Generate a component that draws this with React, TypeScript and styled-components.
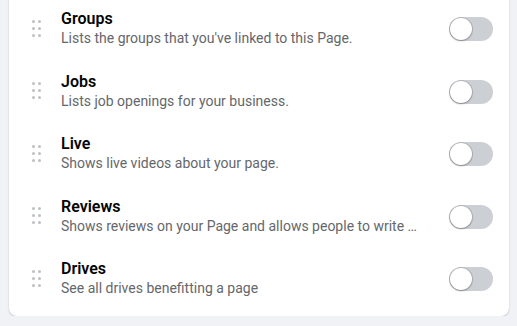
import React, { useState } from 'react';
import styled, { createGlobalStyle } from 'styled-components';

const GlobalStyle = createGlobalStyle`
  html, body {
    margin: 0;
    padding: 0;
    background: #f0f2f5;
    font-family: Roboto, "Liberation Sans", Arial, sans-serif;
    overflow: hidden;
  }
`;

const Page = styled.div`
  padding: 0 8px 0 9px;
`;

const Card = styled.div`
  width: 500px;
  margin-top: -11px;
  padding: 8px 0 6px;
  background: #ffffff;
  border-radius: 8px;
  box-shadow: 0 1px 2px rgba(0, 0, 0, 0.2);
`;

const Row = styled.div`
  display: flex;
  align-items: center;
  padding: 12px 16px 12.5px 23px;
`;

const Handle = styled.div`
  display: grid;
  grid-template-columns: 3px 3px;
  grid-auto-rows: 3px;
  column-gap: 3px;
  row-gap: 4px;
  margin-right: 20px;
  flex-shrink: 0;
`;

const Dot = styled.span`
  width: 3px;
  height: 3px;
  border-radius: 50%;
  background: #bcc0c4;
`;

const Text = styled.div`
  flex: 1;
  min-width: 0;
  margin-right: 32px;
`;

const Title = styled.div`
  font-size: 16px;
  line-height: 20px;
  font-weight: 600;
  color: #050505;
`;

const Description = styled.div`
  font-size: 14px;
  line-height: 18px;
  color: #65676b;
  white-space: nowrap;
  overflow: hidden;
  text-overflow: ellipsis;
`;

const Track = styled.button<{ $on: boolean }>`
  position: relative;
  flex-shrink: 0;
  width: 44px;
  height: 24px;
  margin-top: 2px;
  padding: 0;
  border: none;
  border-radius: 12px;
  background: ${(p) => (p.$on ? '#1877f2' : '#ccd0d5')};
  cursor: pointer;
`;

const Thumb = styled.span<{ $on: boolean }>`
  position: absolute;
  top: 1px;
  left: ${(p) => (p.$on ? '21px' : '1px')};
  width: 22px;
  height: 22px;
  border-radius: 50%;
  background: #ffffff;
  box-shadow: 0 0 0 1px rgba(0, 0, 0, 0.12), 0 1px 2px rgba(0, 0, 0, 0.25);
  transition: left 0.15s;
`;

const tabs = [
  { title: 'Groups', text: "Lists the groups that you've linked to this Page." },
  { title: 'Jobs', text: 'Lists job openings for your business.' },
  { title: 'Live', text: 'Shows live videos about your page.' },
  { title: 'Reviews', text: 'Shows reviews on your Page and allows people to write reviews.' },
  { title: 'Drives', text: 'See all drives benefitting a page' },
];

const App = () => {
  const [enabled, setEnabled] = useState<Record<string, boolean>>({});

  return (
    <>
      <GlobalStyle />
      <Page>
        <Card>
          {tabs.map((tab) => (
            <Row key={tab.title}>
              <Handle>
                {Array.from({ length: 6 }).map((_, i) => (
                  <Dot key={i} />
                ))}
              </Handle>
              <Text>
                <Title>{tab.title}</Title>
                <Description>{tab.text}</Description>
              </Text>
              <Track
                $on={!!enabled[tab.title]}
                onClick={() => setEnabled({ ...enabled, [tab.title]: !enabled[tab.title] })}
              >
                <Thumb $on={!!enabled[tab.title]} />
              </Track>
            </Row>
          ))}
        </Card>
      </Page>
    </>
  );
};

export default App;
